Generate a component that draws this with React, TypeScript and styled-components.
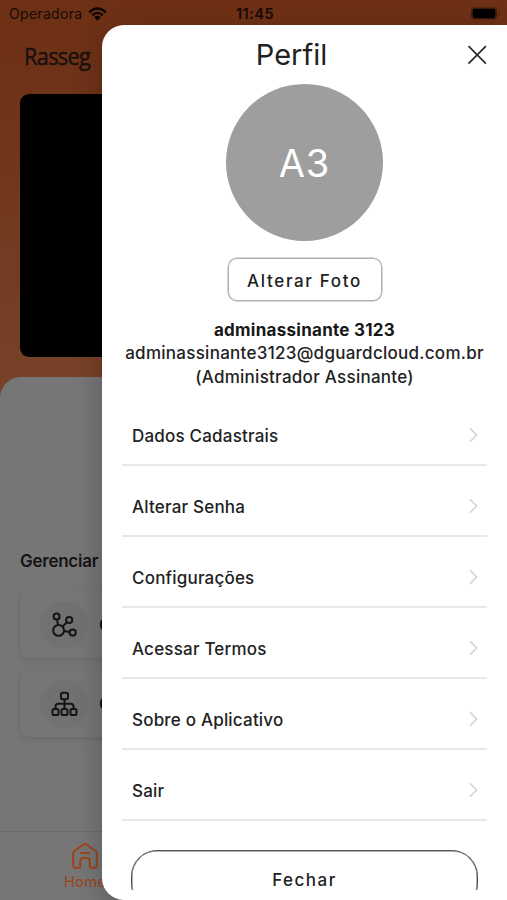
import React from "react";
import styled, { createGlobalStyle } from "styled-components";

const GlobalStyle = createGlobalStyle`
  * { box-sizing: border-box; }
  body { margin: 0; background: #767676; font-family: Inter, "Liberation Sans", sans-serif; color: #222; }
  button { font: inherit; color: inherit; background: none; padding: 0; margin: 0; border: 0; }
`;

const Screen = styled.div`
  position: relative;
  width: 507px;
  height: 900px;
  overflow: hidden;
  background: linear-gradient(#6e3015 0, #6f3319 100px, #774329 400px);
`;

const HomePage = styled.div`
  height: 100%;
  display: flex;
  flex-direction: column;
`;

const StatusBar = styled.div`
  height: 26px;
  flex: none;
  display: grid;
  grid-template-columns: 1fr auto 1fr;
  align-items: center;
  padding: 2px 6px 0 9px;
  font-size: 14px;
  line-height: 24px;
  color: #150b07;
`;

const Carrier = styled.div`
  display: flex;
  align-items: center;
  gap: 6px;
  letter-spacing: 0.3px;
`;

const Clock = styled.div`
  font-weight: 600;
  font-size: 14.5px;
  letter-spacing: 0.5px;
`;

const BatteryIcon = styled.svg`
  justify-self: end;
`;

const Logo = styled.div`
  flex: none;
  height: 68px;
  padding: 11px 0 0 24px;
  font: 400 24.5px/38px "Open Sans", sans-serif;
  letter-spacing: -0.8px;
  color: #1b110c;
  -webkit-text-stroke: 0.5px #1b110c;

  span { display: inline-block; transform: scaleX(0.89); transform-origin: 0 50%; }
`;

const VideoPanel = styled.div`
  flex: none;
  height: 263px;
  margin-left: 20px;
  border-radius: 9px;
  background: #000;
`;

const Sheet = styled.main`
  flex: 1;
  margin-top: 20px;
  border-radius: 21px 21px 0 0;
  background: #767676;
  display: flex;
  flex-direction: column;
`;

const SectionTitle = styled.h2`
  margin: 172px 0 17px 20px;
  font-size: 17px;
  line-height: 24px;
  font-weight: 600;
  letter-spacing: -0.25px;
  color: #141414;
`;

const ManageCard = styled.div`
  height: 68px;
  margin: 0 20px 11px;
  padding: 2px 0 0 20px;
  border-radius: 9px;
  display: flex;
  align-items: center;
  gap: 11px;
  background: #767676;
  box-shadow: 0 2px 6px rgba(0, 0, 0, 0.1);
  font-size: 17px;
  font-weight: 600;
  color: #141414;
`;

const IconDisc = styled.div`
  width: 48px;
  height: 48px;
  border-radius: 50%;
  background: #717171;
  display: grid;
  place-items: center;
`;

const TabBar = styled.nav`
  height: 69px;
  margin-top: auto;
  padding: 10px 0 0 64px;
  border-top: 1px solid #6a6a6a;
`;

const Tab = styled.div`
  width: 42px;
  display: flex;
  flex-direction: column;
  align-items: center;
  font-size: 14.5px;
  line-height: 24px;
  letter-spacing: 0.4px;
  color: #9f4317;
`;

const Drawer = styled.aside`
  position: absolute;
  top: 25px;
  right: 0;
  bottom: 0;
  width: 405px;
  padding: 0 20px 10px;
  display: flex;
  flex-direction: column;
  border-radius: 22px 0 0 22px;
  background: #fff;
  box-shadow: 0 8px 28px rgba(0, 0, 0, 0.24);
`;

const DrawerHeader = styled.header`
  flex: none;
  height: 59px;
  display: grid;
  grid-template-columns: 20px 1fr 20px;
  align-items: center;
`;

const Title = styled.h1`
  grid-column: 2;
  margin: 0 26px 0 0;
  text-align: center;
  font-size: 29px;
  font-weight: 400;
  letter-spacing: 0;
`;

const CloseButton = styled.button`
  display: grid;
  place-items: center;
`;

const Avatar = styled.div`
  flex: none;
  align-self: center;
  width: 157px;
  height: 157px;
  border-radius: 50%;
  background: #9e9e9e;
  color: #fff;
  display: grid;
  place-items: center;
  font-size: 38px;
  font-weight: 400;
  letter-spacing: 0.8px;
`;

const PhotoButton = styled.button`
  flex: none;
  align-self: center;
  width: 154px;
  height: 43px;
  margin-top: 17px;
  padding-top: 2px;
  border: 1px solid #b0b0b0;
  box-shadow: 0 0 0 0.5px #b0b0b0;
  border-radius: 9px;
  font-size: 17px;
  font-weight: 500;
  letter-spacing: 1.65px;
`;

const Identity = styled.div`
  flex: none;
  margin: 18px -20px 0;
  text-align: center;
  font-size: 17px;
  line-height: 23.4px;
  font-weight: 500;
  letter-spacing: 0.27px;
`;

const UserName = styled.div`
  font-weight: 700;
  color: #181818;
`;

const Menu = styled.div`
  flex: none;
  margin-top: 6px;
`;

const MenuRow = styled.div`
  height: 70.9px;
  display: flex;
  align-items: center;
  justify-content: space-between;
  padding: 13px 9px 0 10px;
  border-bottom: 2px solid #e8e8e8;
  font-size: 17px;
  font-weight: 500;
  letter-spacing: 0.2px;

  svg { margin-bottom: 2px; }
`;

const Footer = styled.div`
  flex: 1;
  min-height: 0;
  overflow: hidden;
  padding: 29px 9px 0;
`;

const DismissButton = styled.button`
  display: block;
  width: 100%;
  height: 60px;
  padding-top: 1px;
  border: 1px solid #555;
  box-shadow: inset 0 0 0 0.5px #666;
  border-radius: 26px;
  font-size: 17px;
  font-weight: 500;
  letter-spacing: 1.5px;
`;

const items = [
  "Dados Cadastrais",
  "Alterar Senha",
  "Configurações",
  "Acessar Termos",
  "Sobre o Aplicativo",
  "Sair",
];

const WifiIcon = () => (
  <svg width="19" height="14" viewBox="0 0 19 14" fill="none" stroke="#0d0704" strokeWidth="2.3">
    <path d="M1.2 5.3Q9.5-2.3 17.8 5.3M4.1 8.3Q9.5 3.4 14.9 8.3" />
    <path d="M6.1 10.2Q9.5 7.5 12.9 10.2L9.5 13.7Z" fill="#0d0704" stroke="none" />
  </svg>
);

const Chevron = () => (
  <svg width="9" height="16" viewBox="0 0 9 16" fill="none" stroke="#d4d4d4" strokeWidth="1.6">
    <path d="M1 1.2l6.6 6.8L1 14.8" />
  </svg>
);

const NodesIcon = () => (
  <svg width="26" height="26" viewBox="0 0 26 26" fill="none" stroke="#141414" strokeWidth="2">
    <circle cx="7.6" cy="18.4" r="5.4" />
    <circle cx="5.6" cy="4.4" r="3" />
    <circle cx="18.2" cy="8" r="3.1" />
    <circle cx="21.7" cy="20.6" r="3.1" />
    <path d="M6 7.4l1 5.6M11.5 14.6l4.4-4.4M13 19.1l5.6.9" />
  </svg>
);

const TreeIcon = () => (
  <svg width="27" height="26" viewBox="0 0 27 26" fill="none" stroke="#141414" strokeWidth="2">
    <rect x="10" y="1.8" width="7" height="6.4" rx="1.7" />
    <rect x="1.5" y="18" width="6" height="6" rx="1.6" />
    <rect x="10.5" y="18" width="6" height="6" rx="1.6" />
    <rect x="19.5" y="18" width="6" height="6" rx="1.6" />
    <path d="M13.5 8.2V18M4.5 18v-2.6q0-2.6 2.6-2.6h12.8q2.6 0 2.6 2.6V18" />
  </svg>
);

const HomeIcon = () => (
  <svg width="28" height="28" viewBox="0 0 28 28" fill="none" stroke="#9f4317" strokeWidth="2" strokeLinejoin="round" strokeLinecap="round">
    <path d="M2.2 11.2Q2.2 9.8 3.3 9L12.8 2.3q1.2-.8 2.4 0L24.7 9q1.1.8 1.1 2.2v12.3q0 2.2-2.2 2.2h-3.8q-1 0-1-1V19q0-3.3-4.8-3.3T9.2 19v5.7q0 1-1 1H4.4q-2.2 0-2.2-2.2Z" />
    <path d="M10.3 11h7.4" />
  </svg>
);

export default function App() {
  return (
    <Screen>
      <GlobalStyle />
      <HomePage>
        <StatusBar>
          <Carrier>Operadora <WifiIcon /></Carrier>
          <Clock>11:45</Clock>
          <BatteryIcon width="31" height="15" viewBox="0 0 31 15">
            <rect x="1" y="0.5" width="26" height="12" rx="3.5" fill="#3f1d0d" />
            <rect x="3" y="2.1" width="22" height="8.8" rx="2" fill="#000" />
            <path d="M28.3 4.5q2.2 2.3 0 4.5Z" fill="#3f1d0d" />
          </BatteryIcon>
        </StatusBar>
        <Logo><span>Rasseg</span></Logo>
        <VideoPanel />
        <Sheet>
          <SectionTitle>Gerenciar</SectionTitle>
          <ManageCard><IconDisc><NodesIcon /></IconDisc>C</ManageCard>
          <ManageCard><IconDisc><TreeIcon /></IconDisc>C</ManageCard>
          <TabBar>
            <Tab><HomeIcon />Home</Tab>
          </TabBar>
        </Sheet>
      </HomePage>
      <Drawer>
        <DrawerHeader>
          <Title>Perfil</Title>
          <CloseButton aria-label="Fechar">
            <svg width="20" height="20" viewBox="0 0 20 20" stroke="#2b2b2b" strokeWidth="1.7">
              <path d="M1.5 1.2l17.4 17.4M18.9 1.2L1.5 18.6" />
            </svg>
          </CloseButton>
        </DrawerHeader>
        <Avatar>A3</Avatar>
        <PhotoButton>Alterar Foto</PhotoButton>
        <Identity>
          <UserName>adminassinante 3123</UserName>
          <div>adminassinante3123@dguardcloud.com.br</div>
          <div>(Administrador Assinante)</div>
        </Identity>
        <Menu>
          {items.map((label) => (
            <MenuRow key={label}>{label}<Chevron /></MenuRow>
          ))}
        </Menu>
        <Footer>
          <DismissButton>Fechar</DismissButton>
        </Footer>
      </Drawer>
    </Screen>
  );
}
